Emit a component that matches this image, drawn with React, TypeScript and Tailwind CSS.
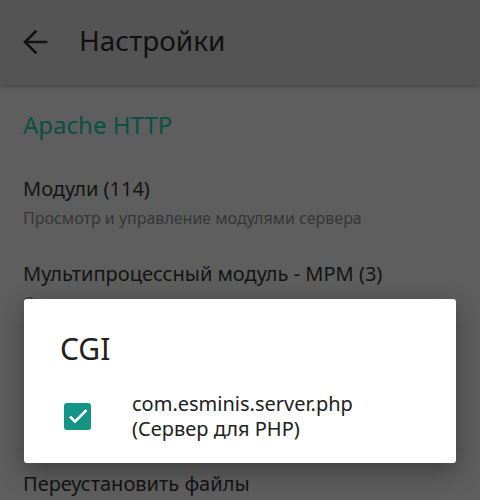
function ArrowBack() {
  return (
    <svg width="26" height="24" viewBox="0 0 26 24" fill="none">
      <path
        d="M24 12H3M13.5 1.5L3 12l10.5 10.5"
        stroke="#111"
        strokeWidth="2.6"
        strokeLinecap="square"
      />
    </svg>
  );
}

function CheckMark() {
  return (
    <svg width="24" height="24" viewBox="0 0 24 24">
      <path d="M9 16.17L4.83 12l-1.42 1.41L9 19 21 7l-1.41-1.41z" fill="white" stroke="white" strokeWidth="0.8" />
    </svg>
  );
}

function PrefItem({ title, summary }: { title: string; summary?: string }) {
  return (
    <div className="px-[23px] py-[13px]">
      <div className="text-[20px] leading-[28px] text-[#141414]">{title}</div>
      {summary && (
        <div className="mt-[3px] text-[16px] leading-[24px] text-[#363636]">{summary}</div>
      )}
    </div>
  );
}

export default function App() {
  return (
    <div
      className="relative w-[480px] h-[500px] overflow-hidden bg-[#5e5e5e]"
      style={{ fontFamily: '"Noto Sans", "Open Sans", sans-serif' }}
    >
      <div className="h-[85px] bg-[#545454] flex items-center shadow-[0_2px_4px_rgba(0,0,0,0.25)]">
        <div className="w-[79px] pl-[22px] pb-[1px] flex items-center">
          <ArrowBack />
        </div>
        <div className="text-[28px] text-[#111] pb-[6px]">Настройки</div>
      </div>

      <div className="pt-[24px]">
        <div className="px-[23px] text-[24px] leading-[32px] text-[#0a5044]">
          Apache HTTP
        </div>
        <div className="h-[21px]" />
        <PrefItem title="Модули (114)" summary="Просмотр и управление модулями сервера" />
        <div className="h-[4px]" />
        <PrefItem
          title="Мультипроцессный модуль - MPM (3)"
          summary="Ответственен за распределение портов на"
        />
        <div className="h-[129px]" />
        <PrefItem title="Переустановить файлы" />
      </div>

      <div className="absolute left-[24px] top-[299px] w-[432px] h-[164px] bg-white rounded-[3px] shadow-[0_8px_24px_rgba(0,0,0,0.35)]">
        <div className="px-[36px] pt-[32px] text-[30px] leading-[36px] text-[#212121]">CGI</div>
        <div className="flex items-center mt-[24px] pl-[40px]">
          <div className="w-[27px] h-[27px] rounded-[3px] bg-[#139484] flex items-center justify-center">
            <CheckMark />
          </div>
          <div className="ml-[41px] text-[20px] leading-[25px] text-[#212121]">
            com.esminis.server.php
            <br />
            (Сервер для PHP)
          </div>
        </div>
      </div>
    </div>
  );
}
